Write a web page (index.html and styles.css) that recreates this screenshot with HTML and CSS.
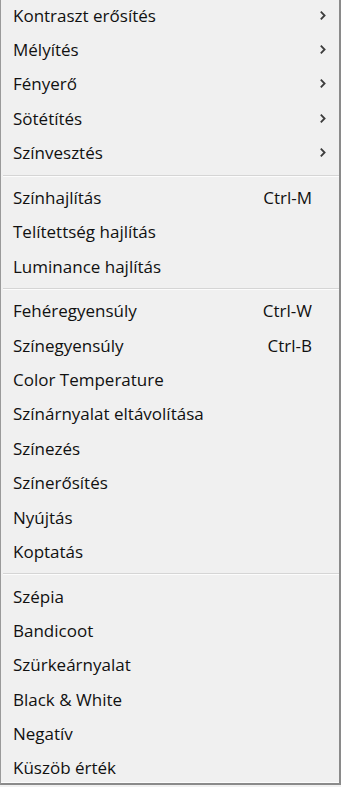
FILE: index.html
```html
<!DOCTYPE html>
<html lang="hu">
<head>
    <meta charset="UTF-8">
    <meta name="viewport" content="width=device-width, initial-scale=1.0">
    <title>Színek menü</title>
    <link rel="stylesheet" href="styles.css">
</head>
<body>
    <div class="menu">
        <!-- Első csoport: almenük -->
        <div class="item"><span class="label">Kontraszt erősítés</span><span class="arrow"><svg width="8" height="11" viewBox="0 0 8 11"><path d="M1.8 1.6 L5.6 5.5 L1.8 9.4" /></svg></span></div>
        <div class="item"><span class="label">Mélyítés</span><span class="arrow"><svg width="8" height="11" viewBox="0 0 8 11"><path d="M1.8 1.6 L5.6 5.5 L1.8 9.4" /></svg></span></div>
        <div class="item"><span class="label">Fényerő</span><span class="arrow"><svg width="8" height="11" viewBox="0 0 8 11"><path d="M1.8 1.6 L5.6 5.5 L1.8 9.4" /></svg></span></div>
        <div class="item"><span class="label">Sötétítés</span><span class="arrow"><svg width="8" height="11" viewBox="0 0 8 11"><path d="M1.8 1.6 L5.6 5.5 L1.8 9.4" /></svg></span></div>
        <div class="item"><span class="label">Színvesztés</span><span class="arrow"><svg width="8" height="11" viewBox="0 0 8 11"><path d="M1.8 1.6 L5.6 5.5 L1.8 9.4" /></svg></span></div>

        <div class="sep"></div>

        <div class="item"><span class="label">Színhajlítás</span><span class="key">Ctrl-M</span></div>
        <div class="item"><span class="label">Telítettség hajlítás</span></div>
        <div class="item"><span class="label">Luminance hajlítás</span></div>

        <div class="sep"></div>

        <div class="item"><span class="label">Fehéregyensúly</span><span class="key">Ctrl-W</span></div>
        <div class="item"><span class="label">Színegyensúly</span><span class="key">Ctrl-B</span></div>
        <div class="item"><span class="label">Color Temperature</span></div>
        <div class="item"><span class="label">Színárnyalat eltávolítása</span></div>
        <div class="item"><span class="label">Színezés</span></div>
        <div class="item"><span class="label">Színerősítés</span></div>
        <div class="item"><span class="label">Nyújtás</span></div>
        <div class="item"><span class="label">Koptatás</span></div>

        <div class="sep"></div>

        <div class="item"><span class="label">Szépia</span></div>
        <div class="item"><span class="label">Bandicoot</span></div>
        <div class="item"><span class="label">Szürkeárnyalat</span></div>
        <div class="item"><span class="label">Black &amp; White</span></div>
        <div class="item"><span class="label">Negatív</span></div>
        <div class="item"><span class="label">Küszöb érték</span></div>
    </div>
</body>
</html>
```

FILE: styles.css
```css
html, body {
    margin: 0;
    height: 100%;
    overflow: hidden;
    background-color: #f0f0f0;
}

body {
    font-family: "Open Sans", "Noto Sans", sans-serif;
    font-size: 17px;
    font-weight: 500;
    color: #111;
}

/* Menü doboz */
.menu {
    box-sizing: border-box;
    height: 787px;
    margin-top: -2px;
    background-color: #f0f0f0;
    border-left: 1px solid #9a9a9a;
    border-right: 2px solid #8a8a8a;
    border-bottom: 2px solid #8a8a8a;
    box-shadow: inset 0 -1px 0 #fbfbfb;
}

.item {
    display: flex;
    align-items: center;
    height: 34.4px;
    padding-left: 12px;
    padding-right: 27px;
}

.label {
    flex: 1;
    white-space: nowrap;
}

.key {
    white-space: nowrap;
}

/* Almenü nyíl */
.arrow {
    display: flex;
    margin-right: -15px;
}

.arrow path {
    fill: none;
    stroke: #3c3c3c;
    stroke-width: 1.8;
}

/* Elválasztó vonal */
.sep {
    height: 10.2px;
    display: flex;
    align-items: center;
    padding-left: 2px;
}

.sep::before {
    content: "";
    flex: 1;
    height: 1px;
    background-color: #d5d5d5;
    box-shadow: 0 1px 0 #fcfcfc;
}
```
